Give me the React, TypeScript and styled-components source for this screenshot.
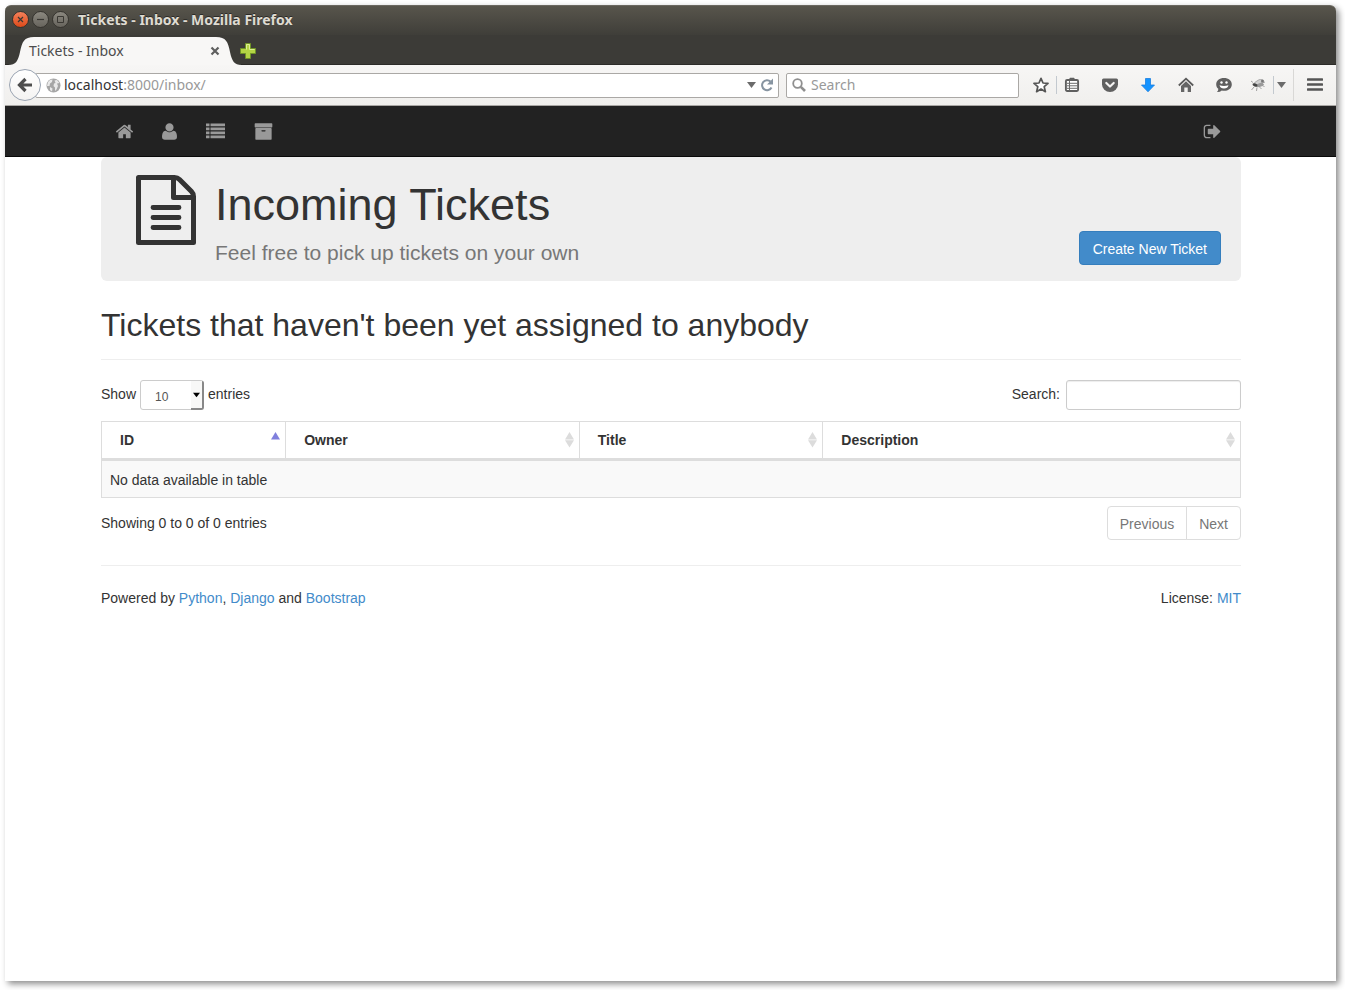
import React from 'react';
import styled, { createGlobalStyle } from 'styled-components';

const GlobalStyle = createGlobalStyle`
  *, *::before, *::after { box-sizing: border-box; }
  body {
    margin: 0;
    background: #fff;
    color: #333;
    font-family: "Liberation Sans", Arial, sans-serif;
    font-size: 14px;
    line-height: 20px;
  }
  button, input, select { font-family: inherit; margin: 0; }
`;

const chromeFont = '"Noto Sans", "Open Sans", sans-serif';

const Screen = styled.div`
  min-height: 100vh;
  padding: 5px 9px 9px 5px;
  display: flex;
`;

const BrowserWindow = styled.div`
  flex: 1;
  min-width: 0;
  background: #fff;
  border-radius: 6px 6px 0 0;
  box-shadow: 3px 3px 6px rgba(0, 0, 0, 0.45);
`;

/* ---------- Browser chrome ---------- */

const TitleBar = styled.header`
  display: flex;
  align-items: center;
  gap: 3px;
  height: 30px;
  padding: 0 7px 2px;
  border-radius: 6px 6px 0 0;
  border-top: 1px solid #6b6860;
  background: linear-gradient(#58554c, #3f3e39);
`;

const WindowButton = styled.button<{ $close?: boolean }>`
  display: flex;
  align-items: center;
  justify-content: center;
  width: 17px;
  height: 17px;
  padding: 0;
  border: 1px solid #35332e;
  border-radius: 50%;
  color: #3a3833;
  background: ${p => (p.$close ? 'linear-gradient(#f5815a, #dd4a1a)' : 'linear-gradient(#8b887f, #67645d)')};
`;

const WindowTitle = styled.div`
  padding-left: 6px;
  color: #dfdbd2;
  font: bold 14px/20px ${chromeFont};
  text-shadow: 0 -1px 0 #2b2a27;
`;

const TabStrip = styled.div`
  display: flex;
  height: 30px;
  padding: 2px 0 0 3px;
  background: #3c3b37;
  border-bottom: 1px solid #2c2b28;
`;

const Tab = styled.div`
  display: grid;
  width: 234px;
  height: 28px;
`;

const TabShape = styled.svg`
  grid-area: 1 / 1;
  display: block;
`;

const TabContent = styled.div`
  grid-area: 1 / 1;
  z-index: 1;
  display: flex;
  align-items: center;
  justify-content: space-between;
  padding: 0 22px 0 21px;
  color: #4c4c4c;
  font: 14px/20px ${chromeFont};
`;

const PlainButton = styled.button`
  display: flex;
  align-items: center;
  justify-content: center;
  padding: 0;
  border: 0;
  background: none;
  color: inherit;
`;

const NewTabButton = styled(PlainButton)`
  z-index: 1;
  width: 16px;
  height: 28px;
  margin-left: -2px;
`;

const Toolbar = styled.div`
  display: flex;
  align-items: center;
  height: 41px;
  padding-left: 4px;
  background: linear-gradient(#f7f6f5, #f0efed);
  border-bottom: 1px solid #a9a7a4;
`;

const BackButton = styled(PlainButton)`
  z-index: 1;
  flex: none;
  width: 32px;
  height: 32px;
  border: 1px solid #9aa4b2;
  border-radius: 50%;
  background: linear-gradient(#fff, #f4f3f2);
`;

const Field = styled.div<{ $address?: boolean }>`
  display: flex;
  align-items: center;
  height: 25px;
  background: #fff;
  border: 1px solid #aaa8a5;
  border-radius: 2px;
  font: 14px/20px ${chromeFont};
  ${p =>
    p.$address
      ? 'flex: 1; min-width: 0; margin: 0 7px 0 -6px; padding: 0 2px 0 10px; gap: 3px;'
      : 'width: 233px; padding: 0 5px; gap: 5px;'}
`;

const Address = styled.div`
  flex: 1;
  color: #999;
`;

const Host = styled.span`
  color: #333;
`;

const SearchInput = styled.input`
  flex: 1;
  min-width: 0;
  padding: 0;
  border: 0;
  outline: 0;
  background: none;
  font: inherit;
  &::placeholder { color: #999; opacity: 1; }
`;

const ToolGroup = styled.div`
  display: flex;
  align-items: center;
  padding-left: 7px;
`;

const ToolButton = styled(PlainButton)<{ $width: number; $after?: number }>`
  width: ${p => p.$width}px;
  height: 32px;
  margin-right: ${p => p.$after || 0}px;
`;

const Divider = styled.span<{ $tall?: boolean }>`
  width: 1px;
  height: ${p => (p.$tall ? 32 : 18)}px;
  background: ${p => (p.$tall ? '#d9d8d6' : '#c3c9cf')};
`;

/* ---------- Site ---------- */

const Site = styled.div`
  padding-left: 1px;
`;

const NavBar = styled.nav`
  height: 51px;
  padding-left: 1px;
  background: #222;
  border-bottom: 1px solid #090909;
`;

const Container = styled.div`
  max-width: 1140px;
  margin: 0 auto;
`;

const NavItems = styled(Container)`
  display: flex;
  height: 50px;
  padding-right: 5px;
`;

const NavLink = styled.a<{ $width: number; $last?: boolean }>`
  display: flex;
  align-items: center;
  justify-content: center;
  width: ${p => p.$width}px;
  margin-left: ${p => (p.$last ? 'auto' : 0)};
  color: #999;
`;

const Hero = styled.section`
  display: flex;
  align-items: flex-start;
  height: 124px;
  padding: 18px 20px 16px 35px;
  background: #eee;
  border-radius: 6px;
`;

const HeroText = styled.div`
  flex: 1;
  padding-left: 19px;
`;

const HeroTitle = styled.h1`
  margin: 5px 0 10px;
  font-size: 45px;
  font-weight: normal;
  line-height: 50px;
`;

const HeroLead = styled.p`
  margin: 0;
  color: #777;
  font-size: 21px;
  line-height: 26px;
`;

const PrimaryButton = styled.button`
  align-self: flex-end;
  height: 34px;
  padding: 2px 13px 0;
  color: #fff;
  font-size: 14px;
  line-height: 20px;
  background: #428bca;
  border: 1px solid #357ebd;
  border-radius: 4px;
`;

const SectionTitle = styled.h2`
  margin: 24px 0 20px;
  padding-bottom: 14px;
  border-bottom: 1px solid #eee;
  font-size: 32px;
  font-weight: normal;
  line-height: 40px;
`;

const Row = styled.div`
  display: flex;
  justify-content: space-between;
`;

const FieldLabel = styled.label`
  display: flex;
  align-items: flex-start;
  gap: 4px;
  line-height: 28px;
`;

const SelectBox = styled.span`
  position: relative;
  display: block;
  width: 64px;
  height: 30px;
`;

const LengthSelect = styled.select`
  appearance: none;
  width: 100%;
  height: 30px;
  padding: 3px 14px 0 14px;
  color: #555;
  font-size: 12px;
  line-height: 18px;
  background: #fff;
  border: 1px solid #ccc;
  border-radius: 3px;
`;

const SelectArrow = styled.span`
  position: absolute;
  top: 1px;
  right: 0;
  bottom: 0;
  display: flex;
  align-items: center;
  justify-content: center;
  width: 13px;
  pointer-events: none;
  background: #f8f8f7;
  border: solid #888;
  border-width: 0 2px 2px 0;
  border-radius: 0 2px 3px 0;
`;

const FilterInput = styled.input`
  width: 175px;
  height: 30px;
  margin-left: 2px;
  padding: 5px 10px;
  font-size: 12px;
  border: 1px solid #ccc;
  border-radius: 3px;
  box-shadow: inset 0 1px 1px rgba(0, 0, 0, 0.075);
`;

const Table = styled.table`
  width: 100%;
  margin: 11px 0 8px;
  table-layout: fixed;
  border: 1px solid #ddd;
  border-collapse: separate;
  border-spacing: 0;
`;

const HeadCell = styled.th`
  padding: 8px 5px 8px 18px;
  text-align: left;
  border-bottom: 3px solid #ddd;
  & + & { border-left: 1px solid #ddd; }
`;

const HeadInner = styled.div`
  display: flex;
  align-items: center;
  justify-content: space-between;
  height: 20px;
`;

const EmptyCell = styled.td`
  padding: 9px 8px 7px;
  background: #f9f9f9;
`;

const Info = styled.div`
  padding-top: 7px;
`;

const Pager = styled.div`
  display: flex;
`;

const PageButton = styled.button`
  height: 34px;
  padding: 2px 12px 0;
  color: #777;
  font-size: 14px;
  line-height: 20px;
  background: #fff;
  border: 1px solid #ddd;
  &:first-child { border-radius: 4px 0 0 4px; }
  &:last-child { margin-left: -1px; border-radius: 0 4px 4px 0; }
`;

const Footer = styled.footer`
  display: flex;
  justify-content: space-between;
  margin-top: 25px;
  padding: 22px 0;
  border-top: 1px solid #eee;
`;

const Link = styled.a`
  color: #428bca;
  text-decoration: none;
`;

/* ---------- Drawings ---------- */

const navPaths = {
  home: 'M1472 992v480q0 26-19 45t-45 19h-384v-384h-256v384h-384q-26 0-45-19t-19-45v-480q0-1 .5-3t.5-3l575-474 575 474q1 2 1 6zm223-69l-62 74q-8 9-21 11h-3q-13 0-21-7l-692-577-692 577q-12 8-24 7-13-2-21-11l-62-74q-8-10-7-23.5t11-21.5l719-599q32-26 76-26t76 26l244 204v-195q0-14 9-23t23-9h192q14 0 23 9t9 23v408l219 182q10 8 11 21.5t-7 23.5z',
  user: 'M1600 1405q0 120-73 189.500t-194 69.500h-874q-121 0-194-69.500t-73-189.500q0-53 3.500-103.500t14-109 26.500-108.500 43-97.500 62-81 85.500-53.500 111.500-20q9 0 42 21.500t74.500 48 108 48 133.500 21.500 133.500-21.500 108-48 74.500-48 42-21.500q61 0 111.500 20t85.500 53.500 62 81 43 97.500 26.500 108.500 14 109 3.500 103.500zm-320-893q0 159-112.500 271.500t-271.500 112.500-271.500-112.500-112.500-271.500 112.500-271.500 271.500-112.500 271.500 112.500 112.500 271.500z',
  archive: 'M1088 832q0-26-19-45t-45-19h-256q-26 0-45 19t-19 45 19 45 45 19h256q26 0 45-19t19-45zm576-192v960q0 26-19 45t-45 19h-1408q-26 0-45-19t-19-45v-960q0-26 19-45t45-19h1408q26 0 45 19t19 45zm64-448v256q0 26-19 45t-45 19h-1536q-26 0-45-19t-19-45v-256q0-26 19-45t45-19h1536q26 0 45 19t19 45z',
  signOut: 'M704 1440q0 4 1 20t.5 26.5-3 23.5-10 19.5-20.5 6.5h-320q-119 0-203.5-84.5t-84.5-203.5v-704q0-119 84.5-203.5t203.5-84.5h320q13 0 22.5 9.5t9.5 22.5q0 4 1 20t.5 26.5-3 23.5-10 19.5-20.5 6.5h-320q-66 0-113 47t-47 113v704q0 66 47 113t113 47h312l11.5 1 11.5 3 8 5.5 7 9 2 13.5zm928-544q0 26-19 45l-544 544q-19 19-45 19t-45-19-19-45v-288h-448q-26 0-45-19t-19-45v-384q0-26 19-45t45-19h448v-288q0-26 19-45t45-19 45 19l544 544q19 19 19 45z',
};

const NavIcon = ({ name }: { name: keyof typeof navPaths }) => (
  <svg width="19" height="19" viewBox="0 0 1792 1792" fill="currentColor" aria-hidden="true">
    <path d={navPaths[name]} />
  </svg>
);

const ListIcon = () => (
  <svg width="19" height="16" viewBox="0 0 19 16" fill="currentColor" aria-hidden="true">
    <path d="M0 .5h3.500v2.700H0zM4.500 .5H19v2.700H4.500zM0 4.500h3.500v2.700H0zM4.500 4.500H19v2.700H4.500zM0 8.500h3.500v2.700H0zM4.500 8.500H19v2.700H4.500zM0 12.500h3.500v2.700H0zM4.500 12.500H19v2.700H4.500z" />
  </svg>
);

const FileIcon = () => (
  <svg width="60" height="70" viewBox="0 0 60 70" fill="none" stroke="#333" strokeWidth="5" strokeLinejoin="round" aria-hidden="true">
    <path d="M2.500 2.500H38.500Q41.500 2.500 43.500 4.500L55.500 16.500Q57.500 18.500 57.500 21.500V67.500H2.500Z" />
    <path d="M37.500 3V22.500H57" />
    <path d="M17 32.500H43M17 42.500H43M17 52.500H43" strokeLinecap="round" strokeWidth="4.800" />
  </svg>
);

const CaretDown = ({ size = 9, color = '#6b6b6b' }: { size?: number; color?: string }) => (
  <svg width={size} height="6" viewBox="0 0 9 6" aria-hidden="true">
    <path d="M0 0h9L4.500 6z" fill={color} />
  </svg>
);

const SortMark = ({ ascending }: { ascending?: boolean }) => (
  <svg width="9" height="16" viewBox="0 0 9 16" aria-hidden="true">
    {ascending ? (
      <path d="M0 7.500L4.500 0 9 7.500z" fill="#8080dd" />
    ) : (
      <path d="M0 7.500L4.500 0 9 7.500zM0 8.300h9L4.500 15.600z" fill="#dcdcdc" />
    )}
  </svg>
);

const tools = {
  star: (
    <path d="M8 1.300L10 6l5 .4-3.800 3.300 1.200 5L8 12l-4.400 2.700 1.200-5L1 6.400 6 6z" fill="#fff" stroke="#555" strokeWidth="1.700" strokeLinejoin="round" />
  ),
  bookmarks: (
    <g>
      <path d="M4.500 3L6 .8h4L11.500 3z" fill="#5f5f5f" />
      <rect x="1.900" y="3" width="12.200" height="11" rx="1.200" fill="#fff" stroke="#5f5f5f" strokeWidth="1.900" />
      <path d="M5.500 3.500v10M3 6.300h10.500M3 8.800h10.500M3 11.300h10.500" stroke="#6b6b6b" strokeWidth="1" />
    </g>
  ),
  pocket: (
    <g>
      <path d="M1.500 1.500h13q1.500 0 1.500 1.500v4.500a8 7.500 0 0 1-16 0V3q0-1.500 1.500-1.500z" fill="#606060" />
      <path d="M4.300 6L8 9.500 11.700 6" fill="none" stroke="#f4f3f2" strokeWidth="2.200" strokeLinecap="round" strokeLinejoin="round" />
    </g>
  ),
  download: <path d="M5.500 1.500h5V8h4L8 14.800 1.500 8h4z" fill="#1493ff" stroke="#1b7fe0" strokeWidth=".8" />,
  home: (
    <g>
      <path d="M.8 8.500L8 1.700l7.200 6.800" fill="none" stroke="#5a5a5a" strokeWidth="1.800" />
      <path d="M3 9l5-4.700L13 9v6H9.700v-4.500H6.300V15H3z" fill="#666" />
    </g>
  ),
  chat: (
    <g>
      <path d="M8 1c4.500 0 7.800 2.700 7.800 6.400S12.500 13.800 8 13.800c-.8 0-1.500 0-2.200-.3Q4 15.200 1 15q1.500-1.300 1.300-3.200C1 10.700.2 9.200.2 7.400.2 3.700 3.500 1 8 1z" fill="#606060" />
      <circle cx="5.500" cy="5.500" r="1.200" fill="#fff" />
      <circle cx="10.500" cy="5.500" r="1.200" fill="#fff" />
      <path d="M3.500 8.200q4.500 1.600 9 0-.8 3.300-4.500 3.300T3.500 8.200z" fill="#fff" />
    </g>
  ),
  bug: (
    <g fill="none" stroke="#999" strokeWidth=".9">
      <path d="M3 5.500L1 4M4 10l-2.500 3M7 10.500L6.500 14M9 9.500l2.500 2.500M11 8l3.500 1.500M12 6l3-1" />
      <ellipse cx="8.500" cy="5.300" rx="4.500" ry="2" transform="rotate(-28 8.500 5.300)" fill="#d0d0d0" stroke="#aaa" />
      <ellipse cx="10" cy="8" rx="3.500" ry="1.400" transform="rotate(-15 10 8)" fill="#999" />
      <ellipse cx="5" cy="8" rx="2.600" ry="1.500" transform="rotate(20 5 8)" fill="#444" stroke="none" />
      <circle cx="12.500" cy="4" r="1.500" fill="#777" stroke="none" />
    </g>
  ),
  menu: <path d="M1 2.500h14M1 7.500h14M1 12.500h14" stroke="#555" strokeWidth="2.600" strokeLinecap="round" />,
};

const ToolIcon = ({ name }: { name: keyof typeof tools }) => (
  <svg width="16" height="16" viewBox="0 0 16 16" aria-hidden="true">
    {tools[name]}
  </svg>
);

const columns = [
  { name: 'ID', width: '16.1%' },
  { name: 'Owner', width: '25.8%' },
  { name: 'Title', width: '21.4%' },
  { name: 'Description', width: '36.7%' },
];

const BrowserChrome = () => (
  <>
    <TitleBar>
      <WindowButton $close aria-label="Close window">
        <svg width="9" height="9" viewBox="0 0 9 9"><path d="M2 2l5 5M7 2L2 7" stroke="currentColor" strokeWidth="1.200" /></svg>
      </WindowButton>
      <WindowButton aria-label="Minimize window">
        <svg width="9" height="9" viewBox="0 0 9 9"><path d="M1 4.500h7" stroke="currentColor" strokeWidth="1.200" /></svg>
      </WindowButton>
      <WindowButton aria-label="Maximize window">
        <svg width="9" height="9" viewBox="0 0 9 9"><path d="M1.500 1.500h6v6h-6z" fill="none" stroke="currentColor" /></svg>
      </WindowButton>
      <WindowTitle>Tickets - Inbox - Mozilla Firefox</WindowTitle>
    </TitleBar>
    <TabStrip>
      <Tab>
        <TabShape width="234" height="28" viewBox="0 0 234 28" aria-hidden="true">
          <path d="M0 28C8 28 10 24 12 15 14 5 16 0 26 0H208C218 0 220 5 222 15 224 24 226 28 234 28z" fill="#f8f7f6" />
        </TabShape>
        <TabContent>
          <span>Tickets - Inbox</span>
          <PlainButton aria-label="Close tab">
            <svg width="10" height="10" viewBox="0 0 10 10"><path d="M1.500 1.500l7 7M8.500 1.500l-7 7" stroke="#5f5f5f" strokeWidth="2.200" /></svg>
          </PlainButton>
        </TabContent>
      </Tab>
      <NewTabButton aria-label="New tab">
        <svg width="16" height="16" viewBox="0 0 16 16"><path d="M5.500.5h5v5h5v5h-5v5h-5v-5h-5v-5h5z" fill="#b4d544" stroke="#6f9326" /><path d="M6.500 6.500v-5h3v5h5" fill="none" stroke="#dcee94" /></svg>
      </NewTabButton>
    </TabStrip>
    <Toolbar>
      <BackButton aria-label="Back">
        <svg width="16" height="16" viewBox="0 0 16 16"><path d="M8.500 2L2.500 8l6 6M3 8h12" fill="none" stroke="#4d4d4d" strokeWidth="3.200" /></svg>
      </BackButton>
      <Field $address>
        <svg width="15" height="15" viewBox="0 0 15 15" aria-hidden="true">
          <circle cx="7.500" cy="7.500" r="7" fill="#a6a6a6" />
          <path d="M2 4l2-2 2.500-.5L6 4 4 5.500 3.500 8 1 8zM8.500 2.500L11 2l2.500 3-2.500.5L12 8l-1.500 3.500L9 13V9.500L7.500 8 8 5.500 9.500 5zM4 9l2.500 1.500L6 13.500 4 12z" fill="#e9e9e9" />
        </svg>
        <Address><Host>localhost</Host>:8000/inbox/</Address>
        <CaretDown />
        <PlainButton aria-label="Reload">
          <svg width="17" height="16" viewBox="0 0 17 16"><path d="M12.500 10.500A5 5 0 1 1 11.500 4.500" fill="none" stroke="#8794a1" strokeWidth="2" /><path d="M14 1.500V7.500H8z" fill="#8794a1" /></svg>
        </PlainButton>
      </Field>
      <Field>
        <svg width="14" height="14" viewBox="0 0 14 14" aria-hidden="true"><circle cx="5.500" cy="5.500" r="4.300" fill="none" stroke="#8f8f8f" strokeWidth="1.800" /><path d="M8.800 8.800L13 13" stroke="#8f8f8f" strokeWidth="2.600" /></svg>
        <SearchInput placeholder="Search" aria-label="Search the web" />
      </Field>
      <ToolGroup>
        <ToolButton $width={30} aria-label="Bookmark"><ToolIcon name="star" /></ToolButton>
        <Divider />
        <ToolButton $width={30} $after={4} aria-label="Bookmarks"><ToolIcon name="bookmarks" /></ToolButton>
        <ToolButton $width={38} aria-label="Pocket"><ToolIcon name="pocket" /></ToolButton>
        <ToolButton $width={38} aria-label="Downloads"><ToolIcon name="download" /></ToolButton>
        <ToolButton $width={38} aria-label="Home"><ToolIcon name="home" /></ToolButton>
        <ToolButton $width={38} aria-label="Chat"><ToolIcon name="chat" /></ToolButton>
        <ToolButton $width={30} aria-label="Debugger"><ToolIcon name="bug" /></ToolButton>
        <Divider />
        <ToolButton $width={14} $after={5} aria-label="Debugger options"><CaretDown /></ToolButton>
        <Divider $tall />
        <ToolButton $width={42} aria-label="Menu"><ToolIcon name="menu" /></ToolButton>
      </ToolGroup>
    </Toolbar>
  </>
);

export default function App() {
  return (
    <>
      <GlobalStyle />
      <Screen>
        <BrowserWindow>
          <BrowserChrome />
          <NavBar>
            <NavItems>
              <NavLink href="#home" $width={47} aria-label="Home"><NavIcon name="home" /></NavLink>
              <NavLink href="#user" $width={43} aria-label="My tickets"><NavIcon name="user" /></NavLink>
              <NavLink href="#all" $width={49} aria-label="All tickets"><ListIcon /></NavLink>
              <NavLink href="#archive" $width={47} aria-label="Archive"><NavIcon name="archive" /></NavLink>
              <NavLink href="#logout" $width={47} $last aria-label="Sign out"><NavIcon name="signOut" /></NavLink>
            </NavItems>
          </NavBar>
          <Site>
            <Container as="main">
              <Hero>
                <FileIcon />
                <HeroText>
                  <HeroTitle>Incoming Tickets</HeroTitle>
                  <HeroLead>Feel free to pick up tickets on your own</HeroLead>
                </HeroText>
                <PrimaryButton>Create New Ticket</PrimaryButton>
              </Hero>
              <SectionTitle>Tickets that haven't been yet assigned to anybody</SectionTitle>
              <Row>
                <FieldLabel>
                  Show
                  <SelectBox>
                    <LengthSelect defaultValue="10">
                      <option>10</option>
                      <option>25</option>
                      <option>50</option>
                      <option>100</option>
                    </LengthSelect>
                    <SelectArrow><CaretDown size={7} color="#000" /></SelectArrow>
                  </SelectBox>
                  entries
                </FieldLabel>
                <FieldLabel>
                  Search:
                  <FilterInput type="search" />
                </FieldLabel>
              </Row>
              <Table>
                <colgroup>
                  {columns.map(c => <col key={c.name} style={{ width: c.width }} />)}
                </colgroup>
                <thead>
                  <tr>
                    {columns.map((c, i) => (
                      <HeadCell key={c.name} scope="col">
                        <HeadInner>{c.name}<SortMark ascending={i === 0} /></HeadInner>
                      </HeadCell>
                    ))}
                  </tr>
                </thead>
                <tbody>
                  <tr><EmptyCell colSpan={4}>No data available in table</EmptyCell></tr>
                </tbody>
              </Table>
              <Row>
                <Info>Showing 0 to 0 of 0 entries</Info>
                <Pager>
                  <PageButton>Previous</PageButton>
                  <PageButton>Next</PageButton>
                </Pager>
              </Row>
              <Footer>
                <div>
                  Powered by <Link href="#python">Python</Link>, <Link href="#django">Django</Link> and <Link href="#bootstrap">Bootstrap</Link>
                </div>
                <div>License: <Link href="#mit">MIT</Link></div>
              </Footer>
            </Container>
          </Site>
        </BrowserWindow>
      </Screen>
    </>
  );
}
